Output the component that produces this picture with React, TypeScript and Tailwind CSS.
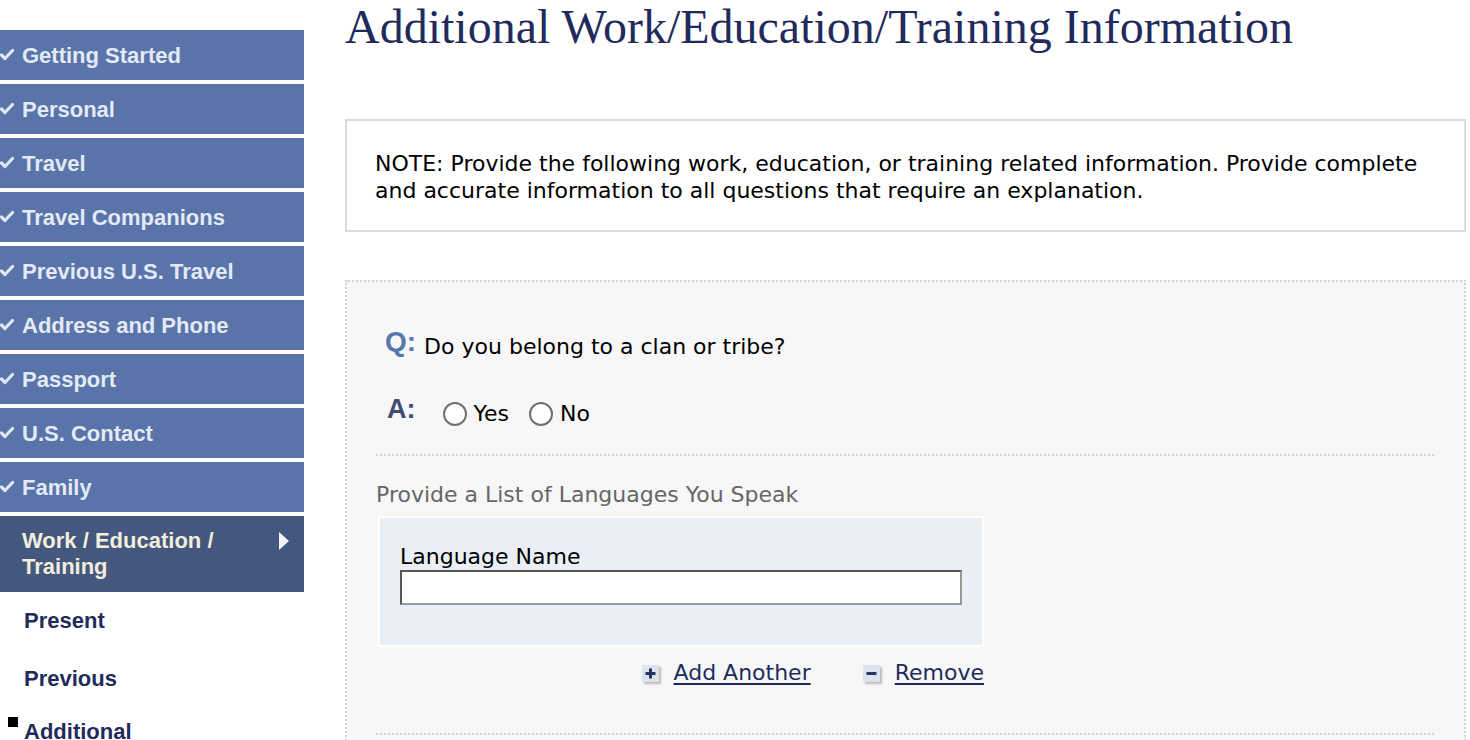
import React from 'react';

const navItems = [
    'Getting Started',
    'Personal',
    'Travel',
    'Travel Companions',
    'Previous U.S. Travel',
    'Address and Phone',
    'Passport',
    'U.S. Contact',
    'Family',
];

function Check() {
    return (
        <svg width="14" height="14" viewBox="0 0 14 14" className="shrink-0">
            <path d="M1.5 7 L5 10.5 L12.5 2.5" fill="none" stroke="#dfe6f2" strokeWidth="3.2" strokeLinecap="round" strokeLinejoin="round" />
        </svg>
    );
}

function IconBox({ minus }: { minus?: boolean }) {
    return (
        <span className="inline-flex items-center justify-center w-[17px] h-[17px] bg-[#dde3ee] shadow-[2px_2px_2px_rgba(0,0,0,0.25)]">
            <svg width="11" height="11" viewBox="0 0 11 11">
                {!minus && <rect x="4" y="0.5" width="3" height="10" fill="#243463" />}
                <rect x="0.5" y="4" width="10" height="3" fill="#243463" />
            </svg>
        </span>
    );
}

function Sidebar() {
    return (
        <div className="w-[304px] shrink-0 pt-[30px] font-['Liberation_Sans',Arial,sans-serif]">
            <div className="flex flex-col gap-[4px]">
                {navItems.map(item => (
                    <div key={item} className="h-[50px] bg-[#5874a9] flex items-center gap-[8px] text-[22px] font-bold text-[#e3eaf5]">
                        <Check />
                        <span>{item}</span>
                    </div>
                ))}
                <div className="h-[76px] bg-[#44577f] flex items-start justify-between pl-[22px] pr-[14px] pt-[12px]">
                    <span className="text-[22px] font-bold leading-[26px] text-[#f3eedb]">
                        Work / Education /<br />Training
                    </span>
                    <svg width="12" height="20" viewBox="0 0 12 20" className="mt-[3px]">
                        <path d="M1 1 L11 10 L1 19 Z" fill="#f2f4f8" />
                    </svg>
                </div>
            </div>
            <div className="flex flex-col text-[22px] font-bold text-[#1f2b5a]">
                <div className="pl-[24px] h-[58px] flex items-center -mt-[1px]">Present</div>
                <div className="pl-[24px] h-[58px] flex items-center">Previous</div>
                <div className="flex items-start pl-[8px] pt-[8px]">
                    <span className="w-[10px] h-[10px] bg-black mt-[2px] mr-[6px]" />
                    <span className="mt-[4px] leading-[26px]">Additional</span>
                </div>
            </div>
        </div>
    );
}

export default function App() {
    return (
        <div className="w-[1470px] h-[740px] overflow-hidden bg-white flex">
            <Sidebar />
            <div className="flex-1 ml-[41px] mr-[4px] font-['DejaVu_Sans',Verdana,sans-serif]">
                <h1 className="font-['Liberation_Serif','Times_New_Roman',serif] text-[48px] leading-[52px] text-[#1f2b5c] pt-[1px]">
                    Additional Work/Education/Training Information
                </h1>

                <div className="mt-[66px] border-2 border-[#dcdcdc] h-[113px] px-[28px] pt-[29px] text-[22px] leading-[27px] text-black">
                    NOTE: Provide the following work, education, or training related information. Provide complete and accurate information to all questions that require an explanation.
                </div>

                <div className="mt-[48px] border-2 border-dotted border-[#d2d2ce] bg-[#f7f7f7] h-[520px] pl-[29px] pr-[30px]">
                    <div className="pt-[46px] flex items-start gap-[8px]">
                        <span className="ml-[9px] font-['Liberation_Sans',Arial,sans-serif] font-bold text-[28px] leading-[28px] text-[#5677ac]">Q:</span>
                        <span className="mt-[6px] text-[22px] leading-[26px] text-black">Do you belong to a clan or tribe?</span>
                    </div>
                    <div className="mt-[41px] h-[26px] flex items-center">
                        <span className="font-['Liberation_Sans',Arial,sans-serif] font-bold text-[27px] leading-[26px] text-[#3d4d73] ml-[11px] -mt-[10px]">A:</span>
                        <label className="flex items-center ml-[27px] gap-[7px] text-[22px] leading-[26px] text-black">
                            <span className="w-[24px] h-[24px] rounded-full border-2 border-[#707070] bg-white" />
                            Yes
                        </label>
                        <label className="flex items-center ml-[20px] gap-[7px] text-[22px] leading-[26px] text-black">
                            <span className="w-[24px] h-[24px] rounded-full border-2 border-[#707070] bg-white" />
                            No
                        </label>
                    </div>

                    <div className="mt-[27px] border-t-2 border-dotted border-[#d6d6d6]" />

                    <div className="mt-[26px] text-[22px] leading-[26px] text-[#666666]">
                        Provide a List of Languages You Speak
                    </div>
                    <div className="mt-[8px] ml-[2px] w-[606px] border-2 border-white bg-[#eaeff6] px-[20px] pt-[26px] pb-[40px]">
                        <div className="text-[22px] leading-[26px] text-black">Language Name</div>
                        <div className="h-[35px] border-2 border-[#565656] border-r-[#9a9a9a] border-b-[#9a9a9a] bg-white" />
                    </div>
                    <div className="mt-[13px] h-[26px] w-[608px] flex justify-end items-center gap-[52px] text-[22px] leading-[26px] text-[#1f2b5c]">
                        <span className="flex items-center gap-[15px]">
                            <IconBox />
                            <span className="underline underline-offset-[3px]">Add Another</span>
                        </span>
                        <span className="flex items-center gap-[15px]">
                            <IconBox minus />
                            <span className="underline underline-offset-[3px]">Remove</span>
                        </span>
                    </div>
                    <div className="mt-[47px] border-t-2 border-dotted border-[#d6d6d6]" />
                </div>
            </div>
        </div>
    );
}
